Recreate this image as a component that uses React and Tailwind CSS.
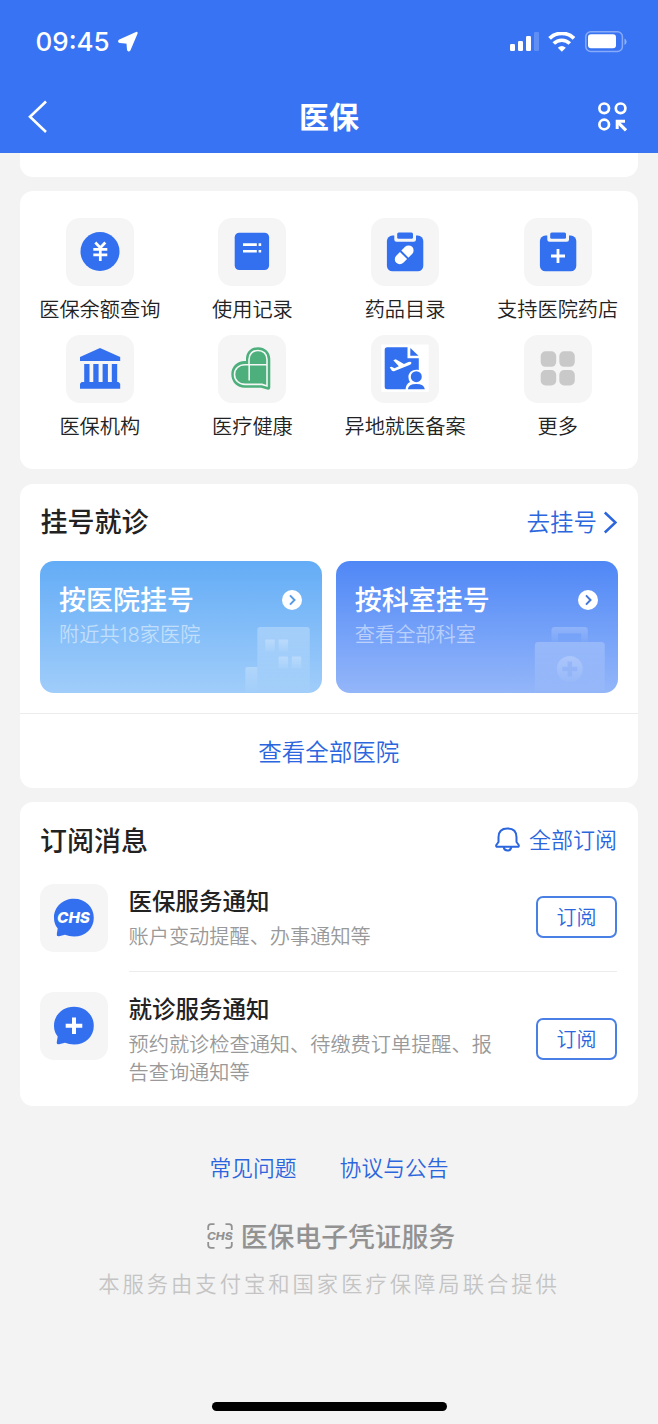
const services = [
  { label: "医保余额查询", Icon: YuanIcon },
  { label: "使用记录", Icon: RecordIcon },
  { label: "药品目录", Icon: PillIcon },
  { label: "支持医院药店", Icon: PharmacyIcon },
  { label: "医保机构", Icon: BankIcon },
  { label: "医疗健康", Icon: HeartIcon },
  { label: "异地就医备案", Icon: TravelIcon },
  { label: "更多", Icon: MoreIcon },
];

function YuanIcon() {
  return (
    <svg viewBox="0 0 68 68" className="size-full">
      <circle cx="34" cy="33.5" r="19.5" fill="#3370f0" />
      <path
        d="M29.3 24.5 34.3 29.8 39.3 24.5M34.3 29.5V43M27.3 31.4H41.3M27.3 36.8H41.3"
        fill="none"
        stroke="#fff"
        strokeWidth="2.7"
      />
    </svg>
  );
}

function RecordIcon() {
  return (
    <svg viewBox="0 0 68 68" className="size-full">
      <rect x="16.7" y="14.8" width="34.4" height="37.3" rx="4.5" fill="#3370f0" />
      <path
        d="M25 26.6H38.8M40.6 26.6H43.2M25 33.3H38.8M40.6 33.3H43.2"
        stroke="#fff"
        strokeWidth="2.6"
      />
    </svg>
  );
}

function Clipboard() {
  return (
    <>
      <rect x="15.9" y="17.6" width="36.4" height="35.7" rx="5.5" fill="#3370f0" />
      <path d="M23.3 16V21.5Q23.3 23.8 25.6 23.8H42.7Q45 23.8 45 21.5V16Z" fill="#f5f5f6" />
      <rect x="26.2" y="14.4" width="15.8" height="6.4" rx="1.5" fill="#3370f0" />
    </>
  );
}

function PillIcon() {
  return (
    <svg viewBox="0 0 68 68" className="size-full">
      <Clipboard />
      <path d="M28.8 41.2 37.6 32.4" stroke="#fff" strokeWidth="10" strokeLinecap="round" />
      <path d="M28.6 32.2 37.8 41.4" stroke="#3370f0" strokeWidth="2" />
    </svg>
  );
}

function PharmacyIcon() {
  return (
    <svg viewBox="0 0 68 68" className="size-full">
      <Clipboard />
      <path d="M34 31V45M27 38H41" stroke="#fff" strokeWidth="2.8" />
    </svg>
  );
}

function BankIcon() {
  return (
    <svg viewBox="0 0 68 68" className="size-full" fill="#3370f0">
      <path d="M34 13 54.2 22V26H14V22Z" />
      <path d="M18.2 29H23.5V47H27.3V29H32.6V47H36.6V29H41.9V47H45.8V29H51.2V47H52.5L54.2 48.8V53.8H14V48.8L15.7 47H18.2Z" />
    </svg>
  );
}

function HeartIcon() {
  return (
    <svg viewBox="0 0 68 68" className="size-full">
      <path
        d="M28 26V24C28 17 33 12.2 40 12.2S52.3 17 52.3 24V52Q52.3 55.3 49.2 54.6L43 52.8H26.7C19 52.8 13.3 47 13.3 39.3S19 26 26.7 26Z"
        fill="#4caf7c"
      />
      <path
        d="M31 29.5V24.5C31 19 34.7 15.5 40 15.5S49 19 49 24.5V51L44 49.4H27C20.8 49.4 16.5 45 16.5 39.4S20.8 29.8 27 29.8H48.5M31.2 29.8V45.5"
        fill="none"
        stroke="#f5f7f6"
        strokeWidth="1.6"
      />
    </svg>
  );
}

function TravelIcon() {
  return (
    <svg viewBox="0 0 68 68" className="size-full">
      <rect x="10.3" y="9.5" width="47.4" height="47.4" fill="#fff" />
      <path
        d="M16.2 12.2H36.5V23.3H47.8V35C41.8 33.8 37.4 37.4 37.4 42Q37.4 44.7 39 47C36 48.3 34.8 51 34.6 54.2H16.2Q13.7 54.2 13.7 51.7V14.7Q13.7 12.2 16.2 12.2Z"
        fill="#3370f0"
      />
      <path d="M39.3 13 47.5 20.7H39.3Z" fill="#3370f0" />
      <path
        d="M18.7 32.3 20.6 31.8 23.5 33.2 27.8 31.2 22.3 25.2 24.7 24.2 33 29 37.4 27.1Q40 26.3 40.4 27.7T38.5 30L23 36.2Q21.6 36.6 20.7 35.5Z"
        fill="#fff"
      />
      <circle cx="45.3" cy="41.7" r="5.5" fill="#3370f0" />
      <path d="M36.8 54.3Q37.5 49 45.3 49T53.8 54.3Z" fill="#3370f0" />
    </svg>
  );
}

function MoreIcon() {
  return (
    <svg viewBox="0 0 68 68" className="size-full" fill="#c9c9ca">
      <rect x="16.7" y="16.3" width="15.5" height="15.5" rx="4.8" />
      <rect x="35.3" y="16.3" width="15.5" height="15.5" rx="4.8" />
      <rect x="16.7" y="35" width="15.5" height="15.5" rx="4.8" />
      <rect x="35.3" y="35" width="15.5" height="15.5" rx="4.8" />
    </svg>
  );
}

function Bubble({ children }) {
  return (
    <svg viewBox="0 0 68 68" className="size-full">
      <path
        d="M34 14.8C45.3 14.8 53.8 23 53.8 33.7S45.3 52.6 34 52.6Q29 52.6 25 50.8L19 52.3Q16.3 52.7 16.8 50L17.7 44.5Q14 40 14 33.7C14 23 22.7 14.8 34 14.8Z"
        fill="#3370f0"
      />
      {children}
    </svg>
  );
}

function StatusBar() {
  return (
    <div className="flex h-[82px] items-center justify-between pt-[2px] pr-[31px] pl-[35.5px]">
      <div className="flex items-center gap-[7px]">
        <span className="font-['Inter'] text-[26px] leading-8 font-medium">09:45</span>
        <svg viewBox="0 0 22 22" className="size-[22px]" fill="#fff" stroke="#fff" strokeLinejoin="round">
          <path d="M19.5 2 12.4 18.8Q11.6 20 11.2 18.6L10.6 11.6 3 10.8Q1.6 10.4 2.8 9.6Z" strokeWidth="2.4" />
        </svg>
      </div>
      <div className="flex items-center">
        <svg viewBox="0 0 30 20" className="h-5 w-[30px]" fill="#fff">
          <rect x="0" y="12" width="5" height="7" rx="1.3" />
          <rect x="8" y="9" width="5" height="10" rx="1.3" />
          <rect x="16" y="4" width="5" height="15" rx="1.3" />
          <rect x="24" y="0" width="5" height="19" rx="1.3" opacity=".2" />
        </svg>
        <svg viewBox="0 0 28 20" className="ml-2 h-5 w-7" fill="none" stroke="#fff">
          <path d="M1.6 6.4A17.3 17.3 0 0 1 26 6.4" strokeWidth="3.8" />
          <path d="M5.8 11.6A11.2 11.2 0 0 1 21.8 11.6" strokeWidth="3.6" />
          <path d="M9.8 15.8Q13.8 12.4 17.8 15.8L13.8 19.8Z" fill="#fff" stroke="none" />
        </svg>
        <svg viewBox="0 0 42 22" className="ml-[9px] h-[22px] w-[42px]">
          <rect x=".8" y=".8" width="36.6" height="19.6" rx="5" fill="none" stroke="#fff" strokeOpacity=".4" strokeWidth="1.5" />
          <rect x="3" y="3.3" width="28" height="14" rx="3" fill="#fff" />
          <path d="M39.5 7.5Q41.6 8.5 41.6 10.7T39.5 14Z" fill="#fff" opacity=".45" />
        </svg>
      </div>
    </div>
  );
}

function Header() {
  return (
    <header className="h-[153px] bg-[#3873f3] text-white">
      <StatusBar />
      <div className="flex h-[70px] items-center justify-between pr-[30px] pl-[27px]">
        <svg viewBox="0 0 31 34" className="h-[34px] w-[31px]" fill="none">
          <path d="M19 1.5 3 16.8 19 32" stroke="#fff" strokeWidth="2.6" />
        </svg>
        <h1 className="pl-[3px] text-[30px] leading-10 font-bold">医保</h1>
        <svg viewBox="0 0 31 30" className="h-[30px] w-[31px]" fill="none" stroke="#fff" strokeWidth="2.7">
          <circle cx="7.2" cy="6.3" r="4.8" />
          <circle cx="23.6" cy="6.3" r="4.8" />
          <circle cx="7.2" cy="22.5" r="4.8" />
          <path d="M29 28.3 21 20.3" strokeWidth="3.2" />
          <path d="M20.2 27V19.3H28" strokeWidth="3" />
        </svg>
      </div>
    </header>
  );
}

function Services() {
  return (
    <section className="mt-[14px] grid h-[278px] grid-cols-4 content-start gap-y-[12px] rounded-[13px] bg-white pt-[27px] pr-[3.5px] pl-[3.5px]">
      {services.map(({ label, Icon }) => (
        <div key={label} className="flex flex-col items-center">
          <div className="size-[68px] overflow-hidden rounded-[14px] bg-[#f5f5f6]">
            <Icon />
          </div>
          <span className="mt-[10px] mb-[-1px] text-[20.2px] leading-7 font-[350] whitespace-nowrap text-[#222]">
            {label}
          </span>
        </div>
      ))}
    </section>
  );
}

function ArrowBadge({ color }) {
  return (
    <svg viewBox="0 0 20 20" className="size-5">
      <circle cx="10" cy="10" r="10" fill="#fff" />
      <path d="M8 5.4 12.5 10 8 14.6" fill="none" stroke={color} strokeWidth="2" />
    </svg>
  );
}

function HospitalArt() {
  return (
    <svg viewBox="0 0 282 132" className="absolute inset-0 size-full">
      <defs>
        <linearGradient id="wall" x1="0" y1="0" x2="0" y2="1">
          <stop offset="0" stopColor="#fff" stopOpacity=".27" />
          <stop offset="1" stopColor="#fff" stopOpacity=".03" />
        </linearGradient>
        <linearGradient id="pane" x1="0" y1="0" x2="0" y2="1">
          <stop offset="0" stopColor="#fff" stopOpacity=".26" />
          <stop offset="1" stopColor="#fff" stopOpacity=".05" />
        </linearGradient>
      </defs>
      <path d="M217.5 131V69Q217.5 66 220.5 66H267Q270 66 270 69V131Z" fill="url(#wall)" />
      <path d="M205.5 131V108Q205.5 106 207.5 106H217.5V131Z" fill="url(#wall)" />
      <g fill="url(#pane)">
        <rect x="225.500" y="78.5" width="9.5" height="12" rx="1" />
        <rect x="238.800" y="78.5" width="9.5" height="12" rx="1" />
        <rect x="238.800" y="95.5" width="9.5" height="12" rx="1" />
        <rect x="252" y="95.5" width="9.5" height="12" rx="1" />
      </g>
    </svg>
  );
}

function MedkitArt() {
  return (
    <svg viewBox="0 0 282 132" className="absolute inset-0 size-full">
      <defs>
        <linearGradient id="kit" x1="0" y1="0" x2="0" y2="1">
          <stop offset="0" stopColor="#fff" stopOpacity=".22" />
          <stop offset="1" stopColor="#fff" stopOpacity=".03" />
        </linearGradient>
      </defs>
      <path
        d="M215.7 81V69Q215.7 66 218.7 66H249Q252 66 252 69V81H245.5V72.5H222.3V81Z"
        fill="url(#kit)"
      />
      <path d="M199 130V84.5Q199 81 202.5 81H265.5Q269 81 269 84.5V130Z" fill="url(#kit)" />
      <circle cx="234" cy="108" r="13" fill="url(#kit)" />
      <path d="M234 100.5V115.5M226.5 108H241.5" stroke="#8db1f7" strokeWidth="4.5" opacity=".7" />
    </svg>
  );
}

function Booking() {
  return (
    <section className="mt-[15px] h-[304px] rounded-[13px] bg-white">
      <div className="flex h-[77px] items-center justify-between px-[20.5px] pt-[1px]">
        <h2 className="text-[27px] leading-9 font-medium text-[#222]">挂号就诊</h2>
        <a className="flex items-center gap-[6px] text-[23.5px] leading-8 font-[350] text-[#2b66de]">
          去挂号
          <svg viewBox="0 0 14 24" className="h-6 w-[14px]" fill="none">
            <path d="M1.8 1.5 12.5 11.5 1.8 21.5" stroke="#2b66de" strokeWidth="2.5" />
          </svg>
        </a>
      </div>
      <div className="mr-[20px] ml-[20px] grid grid-cols-2 gap-[14px]">
        <div className="relative h-[132px] overflow-hidden rounded-[14px] bg-gradient-to-b from-[#63acf6] to-[#a0cdfa] pt-[21px] pr-5 pl-[19px] text-white">
          <HospitalArt />
          <div className="flex items-center justify-between">
            <span className="relative top-px text-[27px] leading-9 font-medium">按医院挂号</span>
            <ArrowBadge color="#579be8" />
          </div>
          <p className="mt-[3px] text-[20.2px] leading-7 font-[350] text-white/50">附近共18家医院</p>
        </div>
        <div className="relative h-[132px] overflow-hidden rounded-[14px] bg-gradient-to-b from-[#4f87f6] to-[#94b6f9] pt-[21px] pr-5 pl-[19px] text-white">
          <MedkitArt />
          <div className="flex items-center justify-between">
            <span className="relative top-px text-[27px] leading-9 font-medium">按科室挂号</span>
            <ArrowBadge color="#4477d8" />
          </div>
          <p className="mt-[3px] text-[20.2px] leading-7 font-[350] text-white/50">查看全部科室</p>
        </div>
      </div>
      <a className="mt-5 flex h-[75px] items-center justify-center border-t border-[#ececec] pt-[3px] text-[23.5px] font-[350] text-[#2b66de]">
        查看全部医院
      </a>
    </section>
  );
}

function SubscribeButton() {
  return (
    <button className="h-[42px] w-[81px] shrink-0 rounded-[7px] border-2 border-[#4a80e6] pt-px text-[20px] leading-7 font-[350] text-[#2b66de]">
      订阅
    </button>
  );
}

function Subscriptions() {
  return (
    <section className="mt-[14px] h-[304px] rounded-[13px] bg-white pr-[20.5px] pl-[20px]">
      <div className="flex h-[76px] items-center justify-between">
        <h2 className="pt-[3px] text-[27px] leading-9 font-medium text-[#222]">订阅消息</h2>
        <a className="flex items-center gap-[9px] text-[22px] leading-8 font-[350] text-[#2b66de]">
          <svg viewBox="0 0 25 26" className="h-[26px] w-[25px]" fill="none" stroke="#2b66de" strokeWidth="2">
            <path
              d="M3.5 15V10.2Q3.5 1.4 12.5 1.4T21.5 10.2V15L23.7 18Q24.3 19.8 22.5 19.8H2.5Q.7 19.8 1.3 18Z"
              strokeLinejoin="round"
            />
            <path d="M8.7 20Q9.2 23.5 12.5 23.5T16.3 20" />
          </svg>
          全部订阅
        </a>
      </div>

      <div className="flex pt-[6px]">
        <div className="size-[68px] shrink-0 rounded-[14px] bg-[#f5f5f6]">
          <Bubble>
            <text
              x="17"
              y="39.3"
              textLength="33"
              lengthAdjust="spacingAndGlyphs"
              className="fill-white font-['Inter'] text-[15px] font-extrabold italic"
            >
              CHS
            </text>
          </Bubble>
        </div>
        <div className="ml-[20.5px] flex h-[88px] flex-1 items-start justify-between border-b border-[#ececec]">
          <div>
            <h3 className="text-[23.5px] leading-9 font-medium text-[#222]">医保服务通知</h3>
            <p className="mt-[3px] text-[20.2px] leading-7 font-[350] text-[#999]">账户变动提醒、办事通知等</p>
          </div>
          <div className="mt-[12px] flex">
            <SubscribeButton />
          </div>
        </div>
      </div>

      <div className="flex items-start pt-5">
        <div className="size-[68px] shrink-0 rounded-[14px] bg-[#f5f5f6]">
          <Bubble>
            <path d="M34 25.5V42M25.7 33.7H42.3" stroke="#fff" strokeWidth="4" />
          </Bubble>
        </div>
        <div className="ml-[20.5px] w-[370px]">
          <h3 className="text-[23.5px] leading-9 font-medium text-[#222]">就诊服务通知</h3>
          <p className="mt-[3px] text-[20.2px] leading-7 font-[350] text-[#999]">
            预约就诊检查通知、待缴费订单提醒、报告查询通知等
          </p>
        </div>
        <div className="mt-[26px] ml-auto flex">
          <SubscribeButton />
        </div>
      </div>
    </section>
  );
}

function Footer() {
  return (
    <footer className="flex flex-1 flex-col items-center">
      <div className="mt-[46px] flex gap-[43px] text-[21.8px] leading-8 font-[350] text-[#2b66de]">
        <a>常见问题</a>
        <a>协议与公告</a>
      </div>
      <div className="mt-[35px] flex items-center gap-[8px] pl-[4px] text-[26.8px] leading-9 font-medium text-[#929292]">
        <svg viewBox="0 0 26 26" className="mb-[2px] size-[26px]">
          <path
            d="M1.2 7V4Q1.2 1.2 4 1.2H7.5M18.5 1.2H22Q24.8 1.2 24.8 4V7M24.8 19V22Q24.8 24.8 22 24.8H18.5M7.5 24.8H4Q1.2 24.8 1.2 22V19"
            fill="none"
            stroke="#929292"
            strokeWidth="1.8"
          />
          <text
            x="0"
            y="16.8"
            textLength="25.5"
            lengthAdjust="spacingAndGlyphs"
            className="fill-[#929292] font-['Inter'] text-[10.5px] font-extrabold italic"
          >
            CHS
          </text>
        </svg>
        医保电子凭证服务
      </div>
      <p className="mt-[13px] text-[21.3px] leading-8 font-[350] tracking-[3px] text-[#c4c4c4]">
        本服务由支付宝和国家医疗保障局联合提供
      </p>
      <div className="mt-auto mb-[13px] h-[9px] w-[235px] rounded-full bg-black" />
    </footer>
  );
}

export default function App() {
  return (
    <div className="flex h-[1424px] w-[658px] flex-col overflow-hidden bg-[#f3f3f3] font-['Inter','Noto_Sans_CJK_SC',sans-serif]">
      <Header />
      <main className="mr-[20.5px] ml-[20px]">
        <div className="h-[24px] rounded-b-[13px] bg-white" />
        <Services />
        <Booking />
        <Subscriptions />
      </main>
      <Footer />
    </div>
  );
}
